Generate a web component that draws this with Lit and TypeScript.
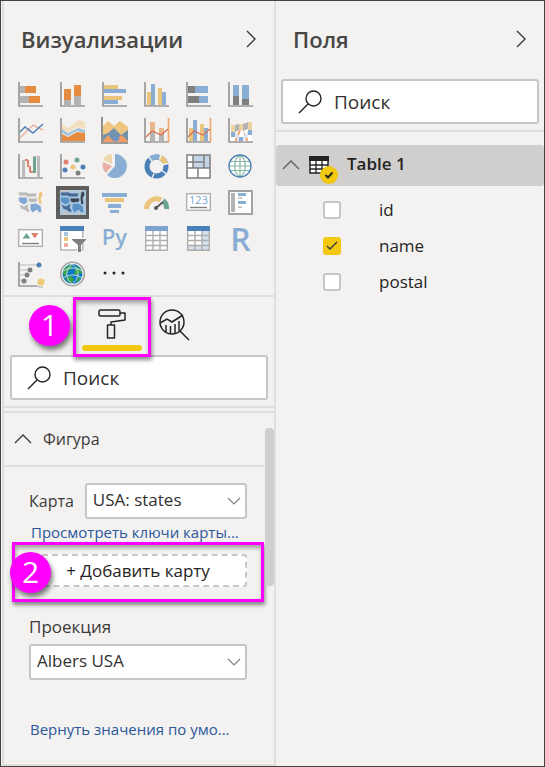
import { LitElement, html, svg, css } from "lit";
import { customElement, state } from "lit/decorators.js";
import { classMap } from "lit/directives/class-map.js";

const GRAY = "#999";
const ORANGE = "#e68c41";
const YELLOW = "#ebc47c";
const BLUE = "#8aaed3";
const DARK = "#7f7f7f";
const LIGHT = "#b3b3b3";
const GREEN = "#6ba591";
const RED = "#df816f";
const NAVY = "#4a7fb8";

const bar = (x: number, y: number, w: number, h: number, fill: string) =>
  svg`<rect x=${x} y=${y} width=${w} height=${h} fill=${fill}></rect>`;
const dot = (cx: number, cy: number, r: number, fill: string) =>
  svg`<circle cx=${cx} cy=${cy} r=${r} fill=${fill}></circle>`;
const fillPath = (d: string, fill: string) => svg`<path d=${d} fill=${fill}></path>`;
const line = (d: string, stroke: string, width = 1) =>
  svg`<path d=${d} fill="none" stroke=${stroke} stroke-width=${width}></path>`;
const axes = line("M9 6V30H33", GRAY, 1.7);

const tableGrid = (head: string, shade: unknown) => svg`
  ${bar(9, 7, 23, 24, "#fff")}${shade}
  ${line("M9.7 10V30.3H31.3V10M17 11V30M24 11V30M9 15.500H32M9 20.500H32M9 25.500H32", "#b0aeac", 1.4)}
  ${bar(9, 6, 23, 5, head)}`;

const states = (top: string, left: string, right: string, mid: string, low: string, edge: string) => svg`
  <g stroke=${edge} stroke-width=".8">
    <path d="M8 8H17L18 9H27L26 13H17L16 12H9Z" fill=${top}></path>
    <path d="M8 13H17L18 18L14 21L9 18Z" fill=${left}></path>
    <path d="M18 14H28L27 18L21 19L18 17Z" fill=${mid}></path>
    <path d="M29 8L32 7L33 11L31 14L32 20L29 21L28 14Z" fill=${right}></path>
    <path d="M9 20L14 22L19 19L18 24L20 26L19 29L14 26L11 25Z" fill=${low}></path>
    <path d="M20 20L26 19L31 22L32 28L29 29L27 26L22 29L20 25Z" fill=${left}></path>
  </g>`;

interface Visual { name: string; art: unknown; selected?: boolean }

const visuals: Visual[] = [
  { name: "Линейчатая диаграмма с накоплением", art: svg`${axes}${bar(10, 10, 5, 7, LIGHT)}${bar(15, 10, 11, 7, ORANGE)}${bar(10, 20, 9, 7, LIGHT)}${bar(19, 20, 11, 7, ORANGE)}` },
  { name: "Гистограмма с накоплением", art: svg`${bar(12, 13, 7, 11, ORANGE)}${bar(12, 24, 7, 5, LIGHT)}${bar(22, 9, 7, 11, ORANGE)}${bar(22, 20, 7, 9, LIGHT)}${axes}` },
  { name: "Линейчатая диаграмма с группировкой", art: svg`${axes}${bar(10, 9, 14, 4, YELLOW)}${bar(10, 13, 22, 4, BLUE)}${bar(10, 20, 18, 4, YELLOW)}${bar(10, 24, 14, 4, BLUE)}` },
  { name: "Гистограмма с группировкой", art: svg`${bar(11, 16, 4, 13, YELLOW)}${bar(15, 8, 4, 21, BLUE)}${bar(22, 12, 4, 17, YELLOW)}${bar(26, 16, 4, 13, BLUE)}${axes}` },
  { name: "Нормированная линейчатая диаграмма", art: svg`${axes}${bar(10, 10, 7, 7, DARK)}${bar(17, 10, 13, 7, BLUE)}${bar(10, 20, 11, 7, DARK)}${bar(21, 20, 9, 7, BLUE)}` },
  { name: "Нормированная гистограмма", art: svg`${bar(13, 9, 6, 11, BLUE)}${bar(13, 20, 6, 9, DARK)}${bar(22, 9, 7, 14, BLUE)}${bar(22, 23, 7, 6, DARK)}${axes}` },

  { name: "График", art: svg`${axes}${line("M10 26L17 19L23 13L33 18", "#ebb0a3", 1.4)}${line("M10 20L15 15L23 21L33 12", NAVY, 1.4)}` },
  { name: "Диаграмма с областями", art: svg`
      ${fillPath("M10 12L16 16L27 8L33 10V17L26 15L16 20L10 17Z", "#f2dfbd")}
      ${fillPath("M10 17L16 21L26 16L33 18V21L25 19L16 24L10 21Z", "#a3c4d9")}
      ${fillPath("M10 22L16 25L25 20L33 21V29H10Z", ORANGE)}${axes}` },
  { name: "Диаграмма с областями с накоплением", art: svg`
      ${fillPath("M9 14L14 9L20 14L26 9L34 15V30H9Z", "#efc580")}
      ${fillPath("M9 23L14 21L20 16L27 23L34 18V30H9Z", "#7293ad")}
      ${fillPath("M9 29L14 23L19 29L22 27L28 23L34 29V30H9Z", "#f19c63")}
      ${fillPath("M18 27L22 24L26 27L22 30Z", "#6b96c8")}
      ${line("M8 5V31H34", DARK, 1.7)}` },
  { name: "График и гистограмма с накоплением", art: svg`${bar(14, 10, 5, 12, "#ebb58d")}${bar(14, 20, 5, 9, LIGHT)}${bar(23, 16, 5, 7, "#ebb58d")}${bar(23, 22, 5, 7, LIGHT)}${axes}${line("M32.500 6V30", "#f0a873", 1.7)}${line("M10 25L16 19L25 23L32 17", "#db6c4f", 1.2)}` },
  { name: "График и гистограмма с группировкой", art: svg`${bar(11, 16, 4, 13, YELLOW)}${bar(15, 8, 4, 21, BLUE)}${bar(22, 12, 4, 17, YELLOW)}${bar(26, 16, 4, 13, BLUE)}${axes}${line("M32.500 6V30", "#f0a873", 1.7)}${line("M10 25L16 19L25 23L32 17", "#db6c4f", 1.2)}` },
  { name: "Ленточная диаграмма", art: svg`
      ${bar(10, 17, 22, 12, "#fff")}
      ${fillPath("M15 13L19 12V18L15 20ZM23 12L28 10V17L23 19Z", LIGHT)}
      ${fillPath("M15 27L19 18H21L17 29H15ZM23 18L28 27V29H26Z", "#f0a873")}
      ${fillPath("M15 20L19 24V29L15 24ZM23 25L28 19V24L23 29Z", "#dce7f2")}
      ${bar(11, 13, 4, 7, "#ecd3a2")}${bar(11, 20, 4, 5, BLUE)}
      ${bar(19, 12, 4, 6, "#ecd3a2")}${bar(19, 25, 4, 4, BLUE)}
      ${bar(28, 10, 4, 8, "#ecd3a2")}${bar(28, 18, 4, 5, BLUE)}${axes}` },

  { name: "Каскадная диаграмма", art: svg`${bar(12, 12, 3, 17, "#bbb")}${bar(17, 12, 2, 7, RED)}${bar(19, 18, 2, 6, RED)}${bar(20, 23, 4, 2, RED)}${bar(15, 11, 3, 2, RED)}${bar(23, 9, 3, 16, GREEN)}${bar(23, 8, 6, 1, "#bbb")}${bar(27, 8, 3, 21, "#bbb")}${axes}` },
  { name: "Точечная диаграмма", art: svg`${axes}${dot(14, 14, 2.5, RED)}${dot(25, 12, 2.5, GREEN)}${dot(21, 19, 2.5, YELLOW)}${dot(13, 22, 2.5, NAVY)}${dot(31, 19, 2.5, NAVY)}${dot(26, 25, 2.5, DARK)}` },
  { name: "Круговая диаграмма", art: svg`
      ${fillPath("M21 18V6A12 12 0 1 1 13 27Z", BLUE)}
      ${fillPath("M18 16L9 12A11 11 0 0 1 18 6Z", "#efd7ae")}
      ${fillPath("M18 18L12 25A11 11 0 0 1 9 14Z", "#ebb0a3")}` },
  { name: "Кольцевая диаграмма", art: svg`
      <circle cx="20.500" cy="18.500" r="9.500" fill="none" stroke=${NAVY} stroke-width="5"></circle>
      ${line("M14.5 11A9.500 9.500 0 0 1 24 9.600", BLUE, 5)}${line("M24 9.600A9.500 9.500 0 0 1 29.600 16", YELLOW, 5)}
      ${line("M23.5 11.5L25.5 5M27 16.800L33 15.200M26 22.500L31 26.500M18 25.500L15.500 31M16 13.500L12 8", "#f3f2f1", 1.4)}` },
  { name: "Диаграмма дерева", art: svg`${bar(9, 7, 23, 23, "#fff")}${bar(15, 7, 17, 13, "#c4d5e9")}${line("M9 7H32V30H9ZM15 7V20M9 20H32M15 14H26M26 7V20M9 14H15M20 20V30", DARK, 1.5)}` },
  { name: "Карта", art: svg`<circle cx="20" cy="18" r="11" fill="#fff"></circle>${line("M10 13.500H30M9 18H31M10 22.500H30M20 7V29M20 7C13 11 13 25 20 29C27 25 27 11 20 7", "#86b5a3", 1.2)}<circle cx="20" cy="18" r="11" fill="none" stroke=${NAVY} stroke-width="1.300"></circle>` },

  { name: "Заполненная карта", art: states("#bbb", "#7fa8d2", "#ebc47c", "#bbb", "#bbb", "#f3f2f1") },
  { name: "Картограмма", selected: true, art: svg`${bar(4, 2, 33, 33, "#605e5c")}${bar(8, 6, 26, 25, "#abc8de")}${fillPath("M8 6H17L19 9H27L29 6H30L28 10H8ZM12 31L10 28H14L20 31ZM26 31L27 28L30 31Z", "#c8c6c4")}${states("#466b94", "#5c91c5", "#3a4654", "#3a4654", "#466b94", "#abc8de")}` },
  { name: "Воронка", art: svg`${bar(8, 9, 25, 4, BLUE)}${bar(11, 14, 19, 4, YELLOW)}${bar(14, 20, 13, 4, BLUE)}${bar(16, 26, 9, 3, BLUE)}` },
  { name: "Датчик", art: svg`${line("M10.500 25A10 10 0 0 1 25 16", YELLOW, 5)}${line("M27 16.500A10 10 0 0 1 30.500 25", GREEN, 5)}${line("M20 24L27 18", "#555", 1.8)}${dot(20, 24, 2, "#555")}` },
  { name: "Карточка", art: svg`<rect x="8.700" y="9.700" width="23.600" height="16.600" fill="#fff" stroke="#b3b3b3" stroke-width="1.500"></rect><text class="digits" x="20.500" y="20" text-anchor="middle" fill="#7ba3cd">123</text>${line("M12 23.500H29", DARK, 1.4)}` },
  { name: "Многострочная карточка", art: svg`<rect x="9" y="7" width="23" height="23" fill="#fff" stroke="#a3a3a3" stroke-width="2"></rect>${bar(11, 9, 4, 19, LIGHT)}${bar(18, 9, 8, 3, BLUE)}${bar(18, 13, 4, 2, "#ccc")}${bar(18, 17, 8, 3, BLUE)}${bar(18, 22, 4, 2, "#ccc")}` },

  { name: "Ключевой показатель", art: svg`<rect x="8.700" y="9.700" width="23.600" height="16.600" fill="#fff" stroke="#b3b3b3" stroke-width="1.500"></rect>${fillPath("M12.500 18.500L16.500 13L20.500 18.500Z", GREEN)}${fillPath("M21 13H28.500L24.700 18.500Z", RED)}${line("M12 23.500H29", DARK, 1.4)}` },
  { name: "Срез", art: svg`<rect x="8.700" y="7" width="22" height="23" fill="#fff" stroke="#b3b3b3" stroke-width="1.400"></rect>${bar(8, 6, 24, 5, NAVY)}${bar(12, 12, 4, 4, "#a9c6e0")}${bar(12, 17, 4, 4, YELLOW)}${bar(12, 23, 4, 4, "#ebb0a3")}${fillPath("M20 18H34V20L29.500 25V32H25.500V25L20 20Z", "#fff")}${fillPath("M20 19H34V20L29 25V32H26V25L20 20Z", DARK)}` },
  { name: "Визуальный элемент Python", art: svg`<text class="py" x="20.500" y="25" text-anchor="middle" fill=${BLUE}>Py</text>` },
  { name: "Таблица", art: tableGrid("#7ba3cd", null) },
  { name: "Матрица", art: tableGrid(NAVY, svg`${bar(24, 11, 8, 19, "#d3e1ee")}${bar(9, 25, 23, 5, "#d3e1ee")}`) },
  { name: "Визуальный элемент R", art: svg`<text class="r" x="20.500" y="31" text-anchor="middle" fill=${BLUE}>R</text>` },

  { name: "Ключевые факторы влияния", art: svg`${axes}${line("M10 9H29M10 14H19M10 19H17M10 24H14", "#bbb", 1)}${dot(29, 9, 2.5, NAVY)}${dot(20, 14, 2.5, DARK)}${dot(17, 19, 2.5, DARK)}${dot(14, 25, 2.5, DARK)}${dot(31, 26, 5, "#f3f2f1")}${dot(31, 26, 3.6, "#f0c978")}${bar(29, 30, 4, 2, "#ccc")}` },
  { name: "Карта ArcGIS", art: svg`<circle cx="20.500" cy="18" r="11.800" fill="#f3f2f1" stroke="#a3a3a3" stroke-width="1.500"></circle>${dot(20.5, 18, 10, "#0b78c4")}
      ${fillPath("M12 13L17 9L21 9L19 13L16 15L14 20L11 19ZM24 10L29 13L30 18L27 17L25 20L22 18L23 14ZM13 22L19 20L22 23L20 27L16 26ZM26 22L29 21L27 25L24 27Z", "#37a447")}
      ${line("M20 8C13 14 13 22 20 28M20 8C28 14 28 22 20 28M11 15C17 11 25 11 30 15M11 22C17 18 25 18 30 22", "#c5dbe7", 1)}` },
  { name: "Другие параметры", art: svg`${dot(11, 17, 1.5, "#252423")}${dot(20, 17, 1.5, "#252423")}${dot(29, 17, 1.5, "#252423")}` },
];

const shared = css`
  * { box-sizing: border-box; }
  svg { display: block; flex: none; }
  button { padding: 0; border: 0; background: none; font: inherit; color: inherit; }
  h2 {
    margin: 0; flex: 1; font-size: 22px; line-height: 28px; font-weight: 600; color: #484644;
  }
  .head { display: flex; align-items: center; height: 75px; padding: 0 18px 0 17px; }
  .rule { height: 2px; background: #e1dfdd; }
`;

@customElement("search-box")
class SearchBox extends LitElement {
  static styles = [shared, css`
    :host { display: block; }
    .box {
      display: flex; align-items: center; gap: 12px; height: 45px; padding-left: 15px;
      background: #fff; border: 2px solid #c8c6c4; border-radius: 3px;
    }
    input {
      flex: 1; min-width: 0; border: 0; padding: 0; outline: 0; background: none;
      font: 19px/24px "Open Sans", "Noto Sans", sans-serif; color: #323130;
    }
    input::placeholder { color: #323130; opacity: 1; }
  `];
  render() {
    return html`<label class="box">
      <svg width="24" height="24" viewBox="0 0 24 24" fill="none" stroke="#252423" stroke-width="1.400">
        <circle cx="15.500" cy="8.500" r="7.500"></circle><path d="M10 14L1 23"></path>
      </svg>
      <input type="text" aria-label="Поиск" placeholder="Поиск">
    </label>`;
  }
}

@customElement("visuals-pane")
class VisualsPane extends LitElement {
  static styles = [shared, css`
    :host { display: flex; flex-direction: column; min-width: 0; margin-left: 1px; border-left: 2px solid #e1dfdd; border-bottom: 2px solid #e1dfdd; }
    .gallery { display: grid; grid-template-columns: repeat(6, 42px); padding: 0 0 3px 6px; }
    .gallery svg { overflow: visible; }
    .digits { font: 11px "Open Sans", sans-serif; }
    .py { font: 600 22px "Open Sans", sans-serif; }
    .r { font: 600 32px "Open Sans", sans-serif; }
    .tabs { position: relative; z-index: 1; display: flex; height: 58px; padding-left: 69px; gap: 2px; }
    .tab { display: flex; flex-direction: column; align-items: center; gap: 6px; position: relative; width: 78px; height: 60px; padding-top: 12px; }
    .tab.plain { width: 42px; }
    .tab.active::after {
      content: ""; width: 60px; height: 6px; border-radius: 3px; background: #f2c811;
    }
    .mark {
      position: absolute; inset: 0; border: 3px solid #f0f; pointer-events: none;
      box-shadow: 1px 3px 4px rgba(0, 0, 0, .45), inset 1px 3px 4px rgba(0, 0, 0, .35);
    }
    .num {
      position: absolute; left: -44px; top: 8px; width: 41px; height: 41px; border-radius: 50%;
      background: #f0f; color: #fff; text-align: center;
      font: 30px/40px "Open Sans", "Noto Sans", sans-serif; box-shadow: 2px 4px 5px rgba(0, 0, 0, .5);
      pointer-events: none;
    }
    .search { padding: 0 6px 6px; }
    .scroller { position: relative; display: flex; flex-direction: column; margin-top: 3px; }
    .thumb { position: absolute; right: 0; top: 17px; width: 9px; height: 158px; border-radius: 4px; background: #d0cfcd; }
    .section { display: flex; align-items: center; gap: 11px; height: 52px; padding-left: 10px; width: 100%; font-size: 16px; line-height: 22px; color: #3b3a39; }
    .form { display: flex; flex-direction: column; padding: 16px 27px 0 25px; font-size: 17px; line-height: 22px; color: #3b3a39; }
    .row { display: flex; align-items: center; gap: 11px; font-size: 16px; }
    .pick { display: flex; flex: 1; position: relative; align-items: center; }
    select {
      appearance: none; width: 100%; height: 36px; padding: 0 24px 2px 6px; margin: 0;
      border: 2px solid #c8c6c4; border-radius: 3px; background: #fff;
      font: 17px/22px "Open Sans", "Noto Sans", sans-serif; color: #323130;
    }
    .pick svg { position: absolute; right: 6px; pointer-events: none; }
    a { font-size: 15px; color: #2b579a; text-decoration: none; white-space: nowrap; }
    .keys { margin: 2px 0 0 2px; }
    .addwrap { position: relative; margin-top: 11px; }
    .add { width: 100%; height: 33px; background: #fff; border: 2px dashed #c8c6c4; border-radius: 3px; color: #252423; }
    .add-mark { inset: -12px -17px -15px -17px; }
    .add-num { left: -19px; top: -2px; }
    .caption { margin: 29px 0 6px; }
    .reset { margin: 38px 0 0 1px; }
  `];
  render() {
    const down = html`<svg width="14" height="8" viewBox="0 0 14 8" fill="none" stroke="#808080" stroke-width="1.200"><path d="M1 1L7 7L13 1"></path></svg>`;
    return html`
      <header class="head">
        <h2>Визуализации</h2>
        <button aria-label="Свернуть"><svg width="10" height="18" viewBox="0 0 10 18" fill="none" stroke="#3b3a39" stroke-width="1.400"><path d="M1 1L9 9L1 17"></path></svg></button>
      </header>
      <div class="gallery">
        ${visuals.map((v) => html`<button aria-label=${v.name} aria-pressed=${v.selected ? "true" : "false"}>
          <svg width="42" height="36" viewBox="0 0 42 36">${v.art}</svg></button>`)}
      </div>
      <div class="rule"></div>
      <div class="tabs">
        <button class="tab active" aria-label="Формат">
          <svg width="30" height="30" viewBox="0 0 30 30" fill="none" stroke="#252423" stroke-width="1.500" stroke-linejoin="round">
            <rect x="2" y="1" width="21" height="6" rx="1.500"></rect>
            <path d="M23 4H28V11L14 13V16"></path><rect x="10.500" y="16" width="7" height="13"></rect>
          </svg>
          <span class="mark"></span><span class="num">1</span>
        </button>
        <button class="tab plain" aria-label="Аналитика">
          <svg width="32" height="32" viewBox="0 0 32 32" fill="none" stroke="#252423" stroke-width="1.500">
            <circle cx="14" cy="13" r="12"></circle><path d="M22 22L31 31"></path>
            <path d="M2 14L9 10L14 13L25 6M8 16V23M12.500 17V25M17 15V24M21 12V22"></path>
          </svg>
        </button>
      </div>
      <search-box class="search"></search-box>
      <div class="rule"></div>
      <div class="scroller">
        <div class="rule"></div>
        <button class="section">
          <svg width="18" height="10" viewBox="0 0 18 10" fill="none" stroke="#3b3a39" stroke-width="1.300"><path d="M1 9L9 1L17 9"></path></svg>
          Фигура
        </button>
        <div class="rule"></div>
        <div class="form">
          <div class="row">
            <label for="map">Карта</label>
            <div class="pick"><select id="map"><option>USA: states</option></select>${down}</div>
          </div>
          <a class="keys" href="#keys">Просмотреть ключи карты...</a>
          <div class="addwrap">
            <button class="add">+ Добавить карту</button>
            <span class="mark add-mark"></span><span class="num add-num">2</span>
          </div>
          <label class="caption" for="projection">Проекция</label>
          <div class="pick"><select id="projection"><option>Albers USA</option></select>${down}</div>
          <a class="reset" href="#reset">Вернуть значения по умо...</a>
        </div>
        <div class="thumb"></div>
      </div>`;
  }
}

@customElement("fields-pane")
class FieldsPane extends LitElement {
  @state() private fields = [
    { name: "id", on: false },
    { name: "name", on: true },
    { name: "postal", on: false },
  ];
  static styles = [shared, css`
    :host { display: block; min-width: 0; border-left: 2px solid #e1dfdd; }
    .search { padding: 3px 5px 6px; }
    .table {
      display: flex; align-items: center; width: 100%; height: 41px; margin-top: 13px; padding: 0 0 1px 6px;
      background: #d0cfcd; border-radius: 3px; font-size: 17px; line-height: 24px; font-weight: 600; color: #252423;
    }
    .grid-icon { margin: 10px 8px 0 9px; }
    .name { padding-bottom: 3px; }
    ul { list-style: none; margin: 0; padding: 6px 0 0; }
    label { display: flex; align-items: center; gap: 38px; height: 36px; padding-left: 47px; font-size: 17px; line-height: 24px; color: #252423; }
    .tick { display: grid; }
    .tick > * { grid-area: 1 / 1; }
    input { appearance: none; width: 18px; height: 18px; margin: 0; border: 2px solid #c8c6c4; border-radius: 3px; background: #fff; }
    input:checked { background: #f2c811; border-color: #f2c811; }
    .tick svg { place-self: center; pointer-events: none; visibility: hidden; }
    .tick.on svg { visibility: visible; }
  `];
  private toggle(i: number) {
    this.fields = this.fields.map((f, n) => (n === i ? { ...f, on: !f.on } : f));
  }
  render() {
    return html`
      <header class="head">
        <h2>Поля</h2>
        <button aria-label="Свернуть"><svg width="10" height="18" viewBox="0 0 10 18" fill="none" stroke="#3b3a39" stroke-width="1.400"><path d="M1 1L9 9L1 17"></path></svg></button>
      </header>
      <search-box class="search"></search-box>
      <div class="rule"></div>
      <button class="table" aria-expanded="true">
        <svg width="18" height="10" viewBox="0 0 18 10" fill="none" stroke="#605e5c" stroke-width="1.300"><path d="M1 9L9 1L17 9"></path></svg>
        <svg class="grid-icon" width="30" height="29" viewBox="0 0 30 29">
          <rect x="1" y="1" width="18" height="16" fill="#fff" stroke="#252423" stroke-width="1.500"></rect>
          <path d="M0 0H20V5H0Z" fill="#252423"></path>
          <path d="M7 4V17M13 4V17M1 9H19M1 13H19" fill="none" stroke="#252423" stroke-width="1.300"></path>
          <circle cx="20" cy="19" r="9" fill="#f2c811"></circle>
          <path d="M16.500 19L19 21.500L23.500 16.500" fill="none" stroke="#252423" stroke-width="2"></path>
        </svg>
        <span class="name">Table 1</span>
      </button>
      <ul>
        ${this.fields.map((f, i) => html`<li><label>
          <span class=${classMap({ tick: true, on: f.on })}>
            <input type="checkbox" .checked=${f.on} @change=${() => this.toggle(i)}>
            <svg width="12" height="10" viewBox="0 0 12 10" fill="none" stroke="#3b3a39" stroke-width="1.400"><path d="M1 5L4 8L11 1"></path></svg>
          </span>${f.name}</label></li>`)}
      </ul>`;
  }
}

@customElement("app-root")
class AppRoot extends LitElement {
  static styles = css`
    :host {
      display: grid; grid-template-columns: 273fr 270fr; box-sizing: border-box; min-height: 100vh;
      border: 1px solid #444; background: #f3f2f1; font-family: "Open Sans", "Noto Sans", sans-serif;
    }
  `;
  render() {
    return html`<visuals-pane></visuals-pane><fields-pane></fields-pane>`;
  }
}
